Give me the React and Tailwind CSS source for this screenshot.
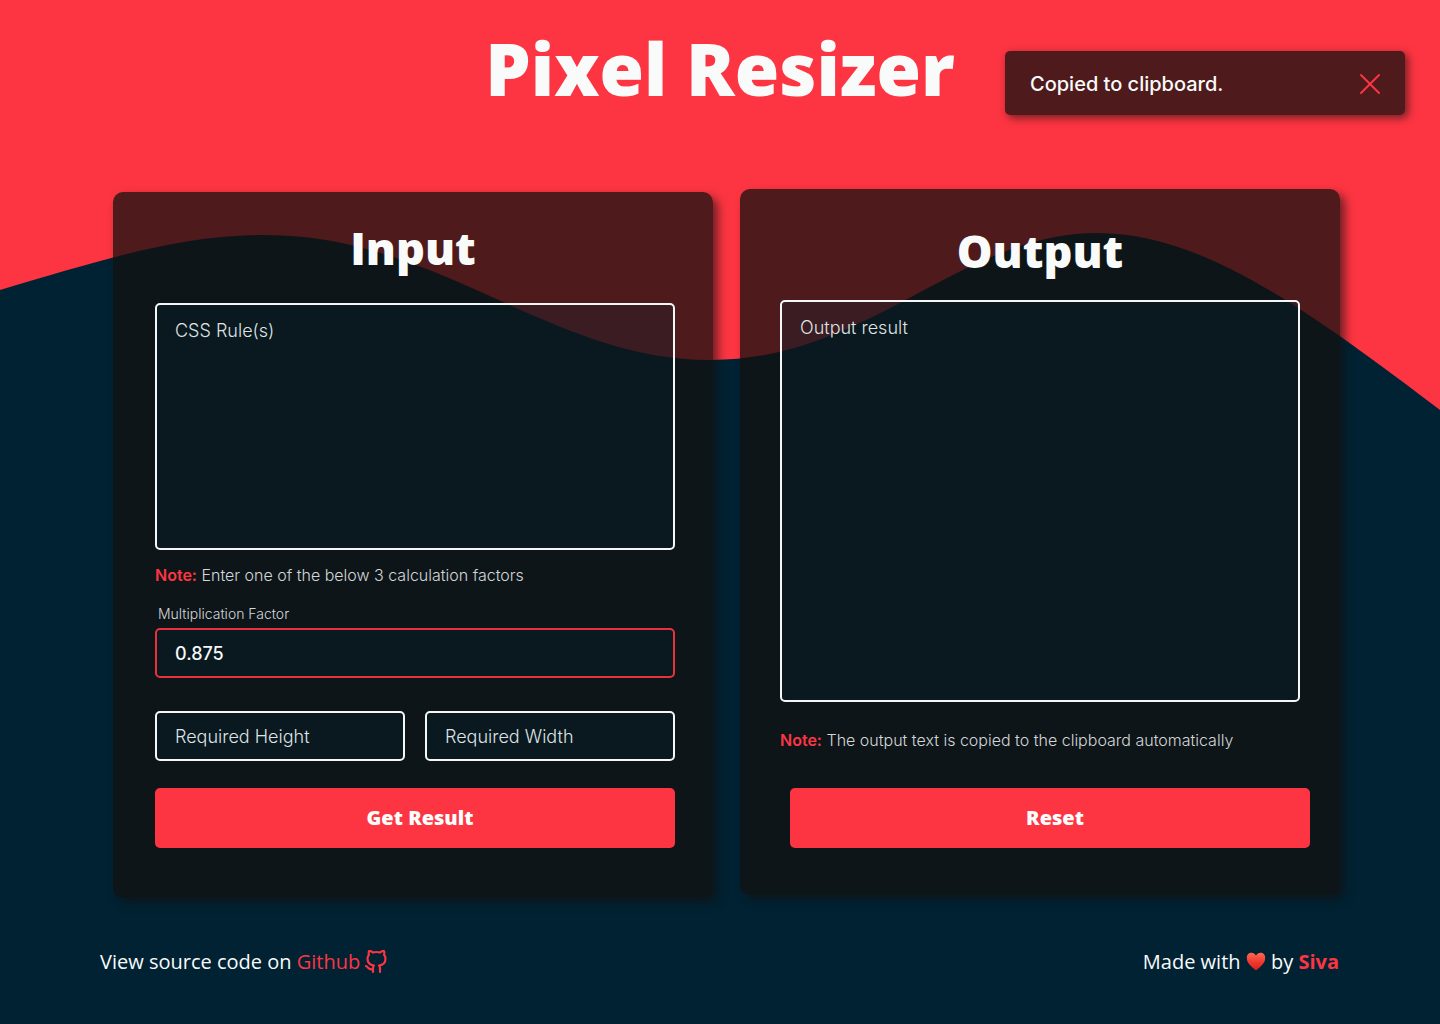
import React from "react";

const FIELD =
  "block w-full rounded-[5px] border-2 border-[#f5f7f7] bg-[#002233]/25 px-[18px] font-['Inter',sans-serif] text-lg text-[#f5f7f7] outline-none placeholder:font-light placeholder:text-[#dfe3e4] placeholder:opacity-100";
const BUTTON =
  "block h-[60px] rounded-[5px] bg-[#fd3542] pl-[10px] text-center text-xl font-extrabold text-[#fcfdfd]";
const CARD =
  "flex flex-col rounded-[10px] bg-[#131110]/75 shadow-[5px_5px_10px_rgba(18,17,17,0.6)]";

function Waves() {
  return (
    <svg
      className="absolute inset-x-0 top-0 h-[410px] w-full"
      viewBox="0 0 1440 410"
      preserveAspectRatio="none"
      aria-hidden="true"
    >
      <path
        fill="#fd3542"
        d="M0 0H1440V410C1300 304 1200 233 1097 233C960 233 870 360 710 360C550 360 440 235 265 235C180 235 105 259 0 290Z"
      />
    </svg>
  );
}

function GithubIcon() {
  return (
    <svg className="h-6 w-6" viewBox="0 0 24 24" fill="none" stroke="currentColor" strokeWidth="2.200" strokeLinecap="round" strokeLinejoin="round" aria-hidden="true">
      <path d="M9 19c-5 1.5-5-2.5-7-3m14 6v-3.87a3.37 3.37 0 0 0-.94-2.61c3.14-.35 6.44-1.54 6.44-7A5.44 5.44 0 0 0 20 4.77 5.07 5.07 0 0 0 19.91 1S18.73.65 16 2.48a13.38 13.38 0 0 0-7 0C6.27.65 5.09 1 5.09 1A5.07 5.07 0 0 0 5 4.77a5.44 5.44 0 0 0-1.5 3.78c0 5.42 3.3 6.61 6.44 7A3.37 3.37 0 0 0 9 18.13V22" />
    </svg>
  );
}

function Heart() {
  return (
    <svg className="h-5 w-5" viewBox="0 0 20 20" role="img" aria-label="love">
      <defs>
        <linearGradient id="heart" x1="0" y1="0" x2="0" y2="1">
          <stop offset="0" stopColor="#ff6a55" />
          <stop offset="0.5" stopColor="#f23a30" />
          <stop offset="1" stopColor="#d81f1c" />
        </linearGradient>
      </defs>
      <path fill="url(#heart)" d="M10 3.800C8.900 1.500 7.300 .8 5.400 .8C2.500 .8 .8 3 .8 6C.8 11.500 5.500 14.500 10 18.500C14.500 14.500 19.200 11.500 19.200 6C19.200 3 17.500 .8 14.600 .8C12.700 .8 11.100 1.500 10 3.800Z" />
    </svg>
  );
}

function Note({ children }) {
  return (
    <p className="font-['Inter',sans-serif] text-base leading-6 font-light text-[#d3d7d8]">
      <strong className="font-semibold text-[#fd3542]">Note:</strong> {children}
    </p>
  );
}

export default function App() {
  return (
    <div className="relative isolate min-h-screen overflow-hidden bg-[#002233] font-['Open_Sans',sans-serif] text-[#f9fbfb]">
      <div className="absolute inset-0 -z-10">
        <Waves />
      </div>

      <header className="flex h-[189px] justify-center pt-5">
        <h1 className="text-[72px] leading-[96px] font-extrabold">Pixel Resizer</h1>
      </header>

      <div
        role="status"
        className="absolute top-[51px] right-[35px] flex h-16 w-[400px] items-center justify-between rounded-[5px] bg-[#131110]/75 pt-px pr-6 pl-[25px] shadow-[3px_3px_8px_rgba(18,17,17,0.6)]"
      >
        <span className="font-['Inter',sans-serif] text-xl font-medium">Copied to clipboard.</span>
        <button type="button" aria-label="Close" className="text-[#fd3542]">
          <svg className="h-[22px] w-[22px]" viewBox="0 0 22 22" fill="none" stroke="currentColor" strokeWidth="2" strokeLinecap="round" aria-hidden="true">
            <path d="M2 2L20 20M20 2L2 20" />
          </svg>
        </button>
      </div>

      <main className="grid grid-cols-2 items-start gap-[27px] pr-[100px] pl-[113px]">
        <section className={`${CARD} mt-[3px] pb-[50px]`}>
          <h2 className="pt-6 text-center text-[45px] leading-[64px] font-extrabold">Input</h2>
          <form className="pt-[23px] pr-[38px] pl-[42px]" onSubmit={(e) => e.preventDefault()}>
            <textarea aria-label="CSS Rule(s)" placeholder="CSS Rule(s)" className={`${FIELD} h-[247px] resize-none py-3`} />
            <div className="pt-[13px]">
              <Note>Enter one of the below 3 calculation factors</Note>
            </div>
            <label htmlFor="factor" className="block pt-[17px] pb-1 pl-[3px] font-['Inter',sans-serif] text-sm font-light text-[#d3d7d8]">
              Multiplication Factor
            </label>
            <input id="factor" defaultValue="0.875" className="block h-[50px] w-full rounded-[5px] border-2 border-[#e9313c] bg-[#002233]/25 px-[18px] font-['Inter',sans-serif] text-lg font-medium text-[#f5f7f7] outline-none" />
            <div className="grid grid-cols-2 gap-5 pt-[33px] pb-[27px]">
              <input aria-label="Required Height" placeholder="Required Height" className={`${FIELD} h-[50px]`} />
              <input aria-label="Required Width" placeholder="Required Width" className={`${FIELD} h-[50px]`} />
            </div>
            <button type="submit" className={`${BUTTON} w-full`}>Get Result</button>
          </form>
        </section>

        <section className={`${CARD} px-10 pb-[47px]`}>
          <h2 className="pt-[30px] text-center text-[45px] leading-[64px] font-extrabold">Output</h2>
          <div className="pt-[17px] pb-[26px]">
            <textarea aria-label="Output result" placeholder="Output result" className={`${FIELD} h-[402px] resize-none py-3`} />
          </div>
          <Note>The output text is copied to the clipboard automatically</Note>
          <button type="button" className={`${BUTTON} mt-9 -mr-[10px] ml-[10px]`}>Reset</button>
        </section>
      </main>

      <footer className="flex items-center justify-between pt-[50px] pr-[101px] pb-11 pl-[100px] text-xl">
        <p className="flex items-center">
          View source code on&nbsp;
          <a href="#github" className="flex items-center gap-1 text-[#fd3542]">
            Github <GithubIcon />
          </a>
        </p>
        <p className="flex items-center">
          Made with&nbsp;
          <Heart />
          &nbsp;by&nbsp;
          <a href="#siva" className="font-bold text-[#fd3542]">Siva</a>
        </p>
      </footer>
    </div>
  );
}
